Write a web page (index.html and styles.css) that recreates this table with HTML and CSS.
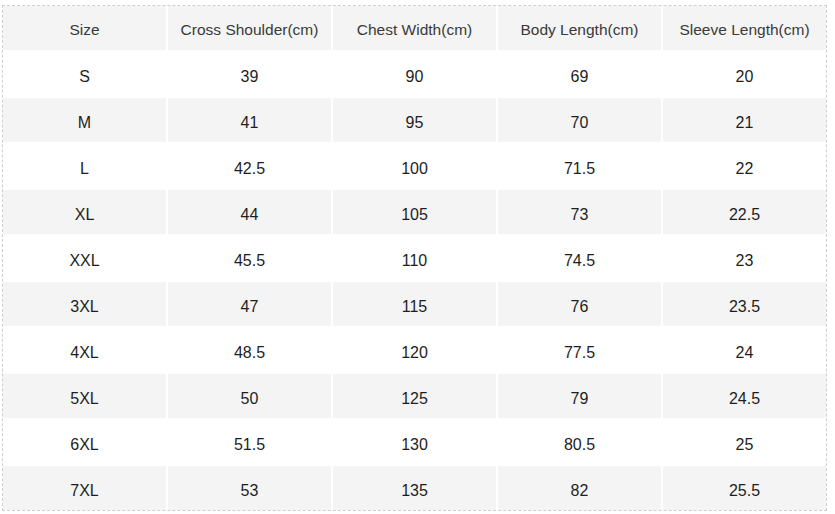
FILE: index.html
```html
<!DOCTYPE html>
<html>
<head>
<meta charset="utf-8">
<link rel="stylesheet" href="styles.css">
</head>
<body>
<div class="wrap">
  <div class="chart">
    <div class="row head"><div>Size</div><div>Cross Shoulder(cm)</div><div>Chest Width(cm)</div><div>Body Length(cm)</div><div>Sleeve Length(cm)</div></div>
    <div class="row"><div>S</div><div>39</div><div>90</div><div>69</div><div>20</div></div>
    <div class="row alt"><div>M</div><div>41</div><div>95</div><div>70</div><div>21</div></div>
    <div class="row"><div>L</div><div>42.5</div><div>100</div><div>71.5</div><div>22</div></div>
    <div class="row alt"><div>XL</div><div>44</div><div>105</div><div>73</div><div>22.5</div></div>
    <div class="row"><div>XXL</div><div>45.5</div><div>110</div><div>74.5</div><div>23</div></div>
    <div class="row alt"><div>3XL</div><div>47</div><div>115</div><div>76</div><div>23.5</div></div>
    <div class="row"><div>4XL</div><div>48.5</div><div>120</div><div>77.5</div><div>24</div></div>
    <div class="row alt"><div>5XL</div><div>50</div><div>125</div><div>79</div><div>24.5</div></div>
    <div class="row"><div>6XL</div><div>51.5</div><div>130</div><div>80.5</div><div>25</div></div>
    <div class="row alt"><div>7XL</div><div>53</div><div>135</div><div>82</div><div>25.5</div></div>
  </div>
</div>
</body>
</html>
```
FILE: styles.css
```css
html, body {
  margin: 0;
  padding: 0;
  background: #fff;
}
.wrap {
  padding: 5px 0 0 2px;
}
.chart {
  display: grid;
  grid-template-columns: repeat(5, 163px);
  grid-auto-rows: 44px;
  gap: 2px;
  width: max-content;
  border: 1px dashed #cfcfcf;
  font-family: "Liberation Sans", Arial, sans-serif;
  font-size: 16px;
  color: #1e1e1e;
}
.row {
  display: contents;
}
.row > div {
  display: flex;
  align-items: center;
  justify-content: center;
  padding-top: 6px;
  box-sizing: border-box;
}
.head > div {
  background: #f4f4f4;
  color: #3a3a3a;
  font-size: 15.5px;
  padding-top: 4px;
}
.alt > div {
  background: #f4f4f4;
}
```
